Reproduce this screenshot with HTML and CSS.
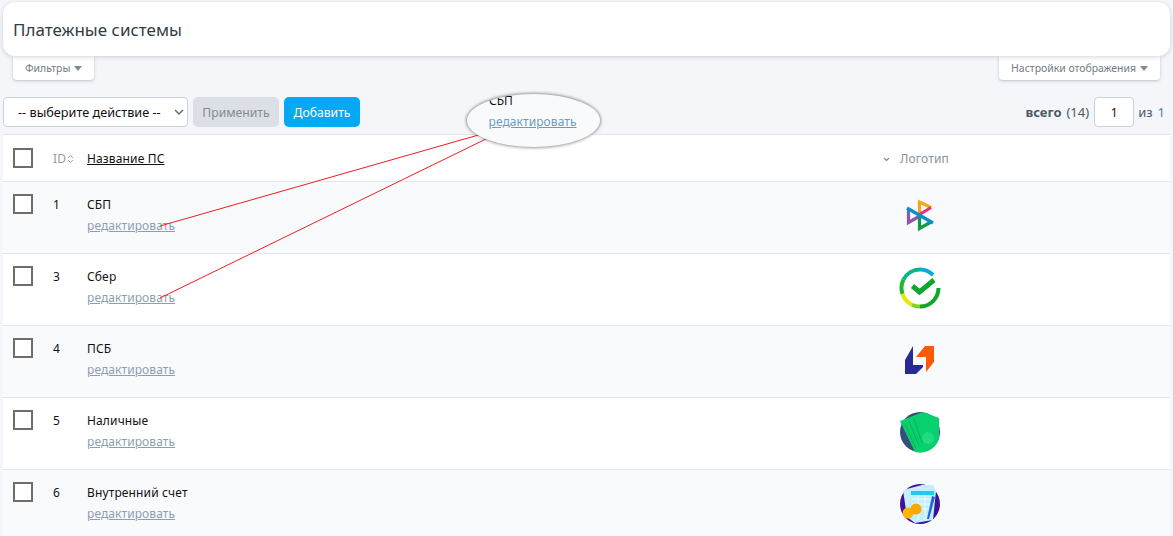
FILE: index.html
```html
<!DOCTYPE html>
<html lang="ru">
<head>
<meta charset="utf-8">
<title>Платежные системы</title>
<link rel="stylesheet" href="styles.css">
</head>
<body>
<div class="page">
  <header class="head-card"><h1>Платежные системы</h1></header>
  <div class="tabs">
    <button class="tab">Фильтры<span class="caret"></span></button>
    <button class="tab">Настройки отображения<span class="caret"></span></button>
  </div>
  <div class="toolbar">
    <div class="select"><span>-- выберите действие --</span>
      <svg class="sel-arrow" width="10" height="6" viewBox="0 0 10 6"><path d="M1 1l4 4 4-4" fill="none" stroke="#666" stroke-width="1.4"/></svg>
    </div>
    <button class="btn btn-off">Применить</button>
    <button class="btn btn-add">Добавить</button>
    <div class="pager"><b>всего</b> (14)<span class="page-num">1</span>из<span class="page-total">1</span></div>
  </div>
  <div class="table">
    <div class="row row-head">
      <span class="check"></span>
      <span class="id-head">ID<svg width="7" height="10" viewBox="0 0 7 10"><path d="M1 4l2.500-2.500L6 4M1 6l2.500 2.500L6 6" fill="none" stroke="#9aa8b3" stroke-width="1"/></svg></span>
      <a class="name-head">Название ПС</a>
      <span class="logo-head"><svg width="7" height="5" viewBox="0 0 7 5"><path d="M1 1l2.500 2.500L6 1" fill="none" stroke="#7f8c96" stroke-width="1.2"/></svg>Логотип</span>
    </div>
    <div class="row row-tint">
      <span class="check"></span><span class="id">1</span>
      <div class="name"><div>СБП</div><a class="edit">редактировать</a></div>
      <div class="logo"><svg width="42" height="42" viewBox="0 0 42 42">
        <defs>
          <linearGradient id="sbpa" x1="0" y1="0" x2="0" y2="1"><stop offset="0" stop-color="#5f6ec0"/><stop offset="1" stop-color="#a34aa8"/></linearGradient>
        </defs>
        <path d="M9.500 14V27.500L20 21.500" fill="none" stroke="url(#sbpa)" stroke-width="3.200"/>
        <path d="M20.500 19.500V7L32 12.500" fill="none" stroke="#f9a51a" stroke-width="3.200"/>
        <path d="M32 12.500L20.500 19.500" fill="none" stroke="#ee2f6e" stroke-width="3.200"/>
        <path d="M20.500 22V33.500L32 27" fill="none" stroke="#0f9a45" stroke-width="3.200"/>
        <path d="M8 13L34 28" fill="none" stroke="#0a8fd0" stroke-width="3.400"/>
      </svg></div>
    </div>
    <div class="row">
      <span class="check"></span><span class="id">3</span>
      <div class="name"><div>Сбер</div><a class="edit">редактировать</a></div>
      <div class="logo"><svg width="42" height="42" viewBox="0 0 42 42">
        <g fill="none" stroke-width="4">
          <path d="M34 8A18.500 18.500 0 0 0 21 2.500" stroke="#08a8e0"/>
          <path d="M21 2.500A18.500 18.500 0 0 0 4.500 12.500" stroke="#0ab58a"/>
          <path d="M4.500 12.500A18.500 18.500 0 0 0 3.500 27" stroke="#20b828"/>
          <path d="M3.500 27A18.500 18.500 0 0 0 13 37.700" stroke="#e8e60a"/>
          <path d="M13 37.700A18.500 18.500 0 0 0 21 39.500" stroke="#7ed321"/>
          <path d="M21 39.500A18.500 18.500 0 0 0 39.500 21" stroke="#0fa82c"/>
        </g>
        <path d="M13.500 19l7 6L35 13" fill="none" stroke="#10a52c" stroke-width="5"/>
      </svg></div>
    </div>
    <div class="row row-tint">
      <span class="check"></span><span class="id">4</span>
      <div class="name"><div>ПСБ</div><a class="edit">редактировать</a></div>
      <div class="logo"><svg width="42" height="42" viewBox="0 0 42 42">
        <path d="M6 21L14 7V26H24V28L17 35H6z" fill="#2a2a96"/>
        <path d="M17 18L26 7H35V23L27 33V18z" fill="#fa5a0a"/>
      </svg></div>
    </div>
    <div class="row">
      <span class="check"></span><span class="id">5</span>
      <div class="name"><div>Наличные</div><a class="edit">редактировать</a></div>
      <div class="logo"><svg width="42" height="42" viewBox="0 0 42 42">
        <circle cx="21" cy="21" r="20" fill="#34507a"/>
        <path d="M1 10L24 1L40 7V28A20 20 0 0 1 16 41Z" fill="#09d06e"/>
        <path d="M6 13l11 25M10 10l10 25M15 8l8 24" stroke="#06b25c" stroke-width="1"/>
        <circle cx="29" cy="27" r="6" fill="#1edc80"/>
      </svg></div>
    </div>
    <div class="row row-tint">
      <span class="check"></span><span class="id">6</span>
      <div class="name"><div>Внутренний счет</div><a class="edit">редактировать</a></div>
      <div class="logo"><svg width="42" height="42" viewBox="0 0 42 42">
        <circle cx="21" cy="21" r="20" fill="#41109a"/>
        <path d="M4 7L23 2H34L37 8L34 37L16 40L8 34z" fill="#c3effc"/>
        <rect x="12" y="8" width="23" height="4" fill="#22c9e8"/>
        <path d="M13 16h20M13 21h20M13 26h20M19 12v25M26 12v25" stroke="#eafbff" stroke-width="1"/>
        <path d="M28 36L33 13L36 14L30 36z" fill="#2264d8"/>
        <circle cx="9" cy="30" r="5.500" fill="#ffb400"/><circle cx="17" cy="26" r="5.500" fill="#f7a700"/>
      </svg></div>
    </div>
  </div>
  <svg class="leaders" width="1173" height="536" viewBox="0 0 1173 536">
    <path d="M160 226L482 134M160 298L488 138" fill="none" stroke="#f01c24" stroke-width="1"/>
  </svg>
  <div class="bubble">
    <div class="bubble-name">СБП</div>
    <a class="edit bubble-edit">редактировать</a>
  </div>
</div>
</body>
</html>
```
FILE: styles.css
```css
* { box-sizing: border-box; }
html, body { margin: 0; height: 536px; overflow: hidden; }
body { background: #f4f6f9; font-family: "Noto Sans", "Liberation Sans", sans-serif; font-size: 12px; color: #111; }
.page { position: relative; width: 1173px; height: 536px; padding: 2px 3px 0; overflow: hidden; }
.head-card { height: 54px; background: #fff; border-radius: 12px; box-shadow: 0 1px 4px rgba(60, 70, 90, .22); padding: 0 10px; display: flex; align-items: center; position: relative; }
.head-card h1 { margin: 0; font-size: 17px; font-weight: 400; color: #333b42; }
.tabs { display: flex; justify-content: space-between; padding: 0 10px; height: 24px; }
.tab { height: 24px; border: 0; background: #fff; border-radius: 0 0 4px 4px; box-shadow: 0 1px 3px rgba(60, 70, 90, .3); padding: 0 12px; font: 400 10.450px "Noto Sans", sans-serif; color: #6f7b85; display: flex; align-items: center; gap: 4px; }
.caret { width: 0; height: 0; border-left: 4.500px solid transparent; border-right: 4.500px solid transparent; border-top: 5px solid #7f8b95; }
.toolbar { display: flex; align-items: center; gap: 5px; height: 30px; margin-top: 17px; }
.select { width: 185px; height: 30px; background: #fff; border: 1px solid #c8d2db; border-radius: 4px; display: flex; align-items: center; justify-content: space-between; padding: 0 3px 0 14px; font-size: 12.700px; color: #111; }
.btn { height: 30px; border: 0; border-radius: 5px; font: 400 12.200px "Noto Sans", sans-serif; }
.btn-off { width: 86px; background: #dcdfe5; color: #838b94; }
.btn-add { width: 76px; background: #03a9f4; color: #fff; }
.pager { margin-left: auto; margin-right: 5px; display: flex; align-items: center; font-size: 13px; color: #4c5a66; white-space: pre; }
.pager b { margin-right: 1.500px; }
.page-num { width: 40px; height: 30px; margin: 0 4px 0 5px; background: #fff; border: 1px solid #c8d2db; border-radius: 4px; display: flex; align-items: center; justify-content: center; color: #111; font-size: 12px; }
.page-total { color: #3d87b0; margin-left: 5px; }
.table { margin-top: 7px; width: 1167px; background: #fff; border-top: 1px solid #e2e6ec; }
.row { height: 72px; display: grid; grid-template-columns: 40px 34px 1fr 287px; padding: 12px 0 0 10px; background: #fff; border-bottom: 1px solid #e2e6ec; align-items: start; letter-spacing: .14px; }
.row-head { height: 47px; padding-top: 13px; }
.row-tint { background: #f9fafc; }
.check { display: block; width: 20px; height: 20px; border: 2px solid #6d6d6d; background: #fff; }
.id { line-height: 18px; padding-top: 2px; color: #111; }
.id-head { color: #8aa0a8; line-height: 20px; padding-top: 1px; display: flex; align-items: center; gap: 1px; }
.name-head { color: #111; line-height: 20px; padding-top: 1px; text-decoration: underline; }
.name { line-height: 18px; padding-top: 2px; }
.edit { color: #8a9fb3; text-decoration: underline; display: block; margin-top: 3px; line-height: 18px; letter-spacing: .08px; }
.logo { margin: 1px 0 0 16px; width: 42px; height: 42px; }
.logo svg { display: block; }
.logo-head { line-height: 20px; padding-top: 1px; color: #84939e; display: flex; align-items: center; gap: 10px; }
.leaders { position: absolute; left: 0; top: 0; pointer-events: none; }
.bubble { position: absolute; left: 467px; top: 94px; width: 133px; height: 53px; border-radius: 50%; background: #f9fafc; box-shadow: 0 0 3px 1px rgba(70, 70, 70, .55); overflow: hidden; padding-left: 22px; }
.bubble-name { margin-top: -2px; line-height: 18px; color: #111; }
.bubble-edit { margin: 3px 0 0 -.5px; color: #6f9bbd; }
```
